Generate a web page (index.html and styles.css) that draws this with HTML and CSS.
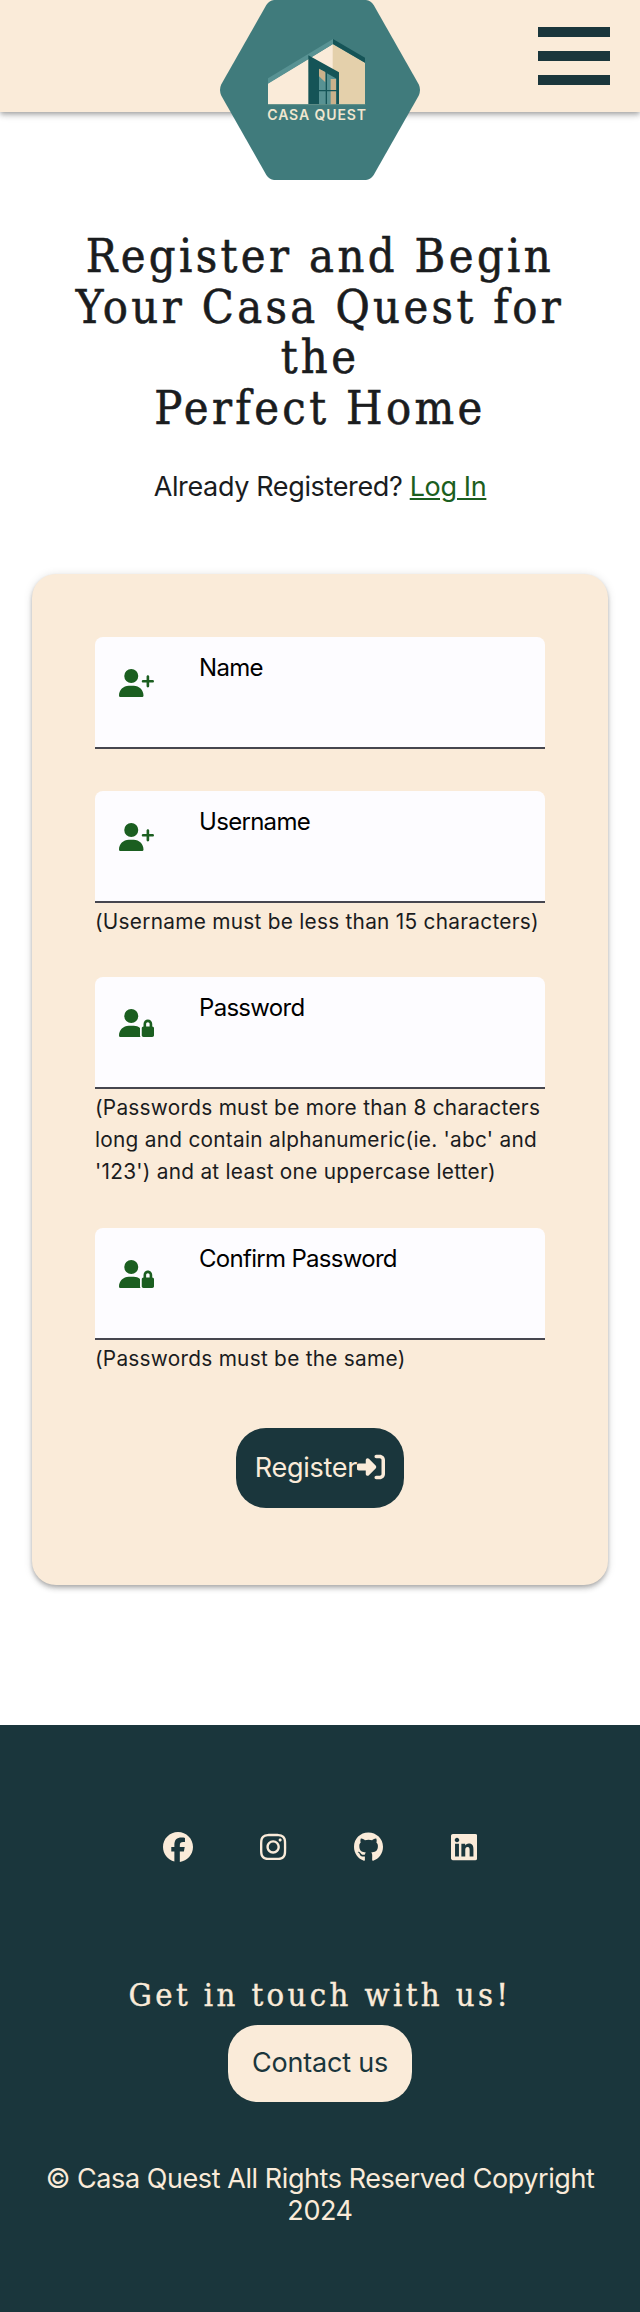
FILE: index.html
```html
<!DOCTYPE html>
<html lang="en">
<head>
<meta charset="utf-8">
<title>Casa Quest - Register</title>
<link rel="stylesheet" href="styles.css">
</head>
<body>
<svg class="sprite" aria-hidden="true">
  <symbol id="user-plus" viewBox="0 0 640 512"><path d="M96 128a128 128 0 1 1 256 0A128 128 0 1 1 96 128zM0 482.3C0 383.8 79.8 304 178.3 304h91.4C368.2 304 448 383.8 448 482.3c0 16.4-13.3 29.7-29.7 29.7H29.7C13.3 512 0 498.7 0 482.3zM504 312V248H440c-13.3 0-24-10.7-24-24s10.7-24 24-24h64V136c0-13.3 10.7-24 24-24s24 10.7 24 24v64h64c13.3 0 24 10.7 24 24s-10.7 24-24 24H552v64c0 13.3-10.7 24-24 24s-24-10.7-24-24z"/></symbol>
  <symbol id="user-lock" viewBox="0 0 640 512"><path d="M224 256A128 128 0 1 0 224 0a128 128 0 1 0 0 256zm-45.7 48C79.8 304 0 383.8 0 482.3C0 498.7 13.3 512 29.7 512H392.6c-5.4-9.4-8.6-20.3-8.6-32V352c0-2.1 .1-4.2 .3-6.3c-31-26-71-41.7-114.6-41.7H178.3zM528 240c17.7 0 32 14.3 32 32v48H496V272c0-17.7 14.3-32 32-32zm-80 32v48c-17.7 0-32 14.3-32 32V480c0 17.7 14.3 32 32 32H608c17.7 0 32-14.3 32-32V352c0-17.7-14.3-32-32-32V272c0-44.2-35.8-80-80-80s-80 35.8-80 80z"/></symbol>
</svg>

<header class="topbar">
  <a class="logo" href="#" aria-label="Casa Quest">
    <svg width="200" height="180" viewBox="60 0 600 540">
      <path fill="#407b7c" d="M222 0H498Q512 1 521 15L656 253Q664 270 656 287L521 525Q512 539 498 540H222Q208 539 199 525L64 287Q56 270 64 253L199 15Q208 1 222 0Z"/>
      <path fill="#faebd9" d="M204 250L399 132V313H204Z"/>
      <path fill="#e4d0ab" d="M398 132L495 188V313H398Z"/>
      <path fill="#589293" d="M204 235L399 117V132L325 178L204 251Z"/>
      <path fill="#155457" d="M399 117L495 173V188L399 132Z"/>
      <path fill="#155457" d="M325 166L417 217V313H325Z"/>
      <path fill="#589293" d="M357 206L411 237V313H357Z"/>
      <path fill="#cbb18b" d="M357 206L376 216V247L357 229ZM392 237H408V313H392Z"/>
      <path fill="none" stroke="#155457" stroke-width="4" d="M379 216V313M357 272H412M411 234V313"/>
      <path stroke="#5f9087" stroke-width="2" d="M204 314H497"/>
      <text class="logo-text" x="202" y="361" textLength="296">CASA QUEST</text>
    </svg>
  </a>
  <button class="menu" aria-label="Menu"><span></span><span></span><span></span></button>
</header>

<main class="page">
  <h1 class="title">Register and Begin<br>Your Casa Quest for<br>the<br>Perfect Home</h1>
  <p class="switch">Already Registered? <a href="#">Log In</a></p>

  <form class="card">
    <div class="field">
      <label class="input"><svg class="icon"><use href="#user-plus"/></svg><span>Name</span></label>
    </div>
    <div class="field">
      <label class="input"><svg class="icon"><use href="#user-plus"/></svg><span>Username</span></label>
      <p class="hint">(Username must be less than 15 characters)</p>
    </div>
    <div class="field">
      <label class="input"><svg class="icon"><use href="#user-lock"/></svg><span>Password</span></label>
      <p class="hint">(Passwords must be more than 8 characters<br>long and contain alphanumeric(ie. 'abc' and<br>'123') and at least one uppercase letter)</p>
    </div>
    <div class="field">
      <label class="input"><svg class="icon"><use href="#user-lock"/></svg><span>Confirm Password</span></label>
      <p class="hint">(Passwords must be the same)</p>
    </div>
    <button class="submit" type="button"><span>Register</span><svg width="28" height="28" viewBox="0 0 512 512"><path d="M217.9 105.9L340.7 228.7c7.2 7.2 11.3 17.1 11.3 27.3s-4.1 20.1-11.3 27.3L217.9 406.1c-6.4 6.4-15 9.9-24 9.9c-18.7 0-33.9-15.2-33.9-33.9l0-62.1L32 320c-17.7 0-32-14.3-32-32l0-64c0-17.7 14.3-32 32-32l128 0 0-62.1c0-18.7 15.2-33.9 33.9-33.9c9 0 17.6 3.6 24 9.9zM352 416l64 0c17.7 0 32-14.3 32-32l0-256c0-17.7-14.3-32-32-32l-64 0c-17.7 0-32-14.3-32-32s14.3-32 32-32l64 0c53 0 96 43 96 96l0 256c0 53-43 96-96 96l-64 0c-17.7 0-32-14.3-32-32s14.3-32 32-32z"/></svg></button>
  </form>
</main>

<footer class="footer">
  <nav class="social">
    <a href="#" aria-label="Facebook"><svg width="30" height="30" viewBox="0 0 512 512"><path d="M512 256C512 114.6 397.4 0 256 0S0 114.6 0 256C0 376 82.7 476.8 194.2 504.5V334.2H141.4V256h52.8V222.3c0-87.1 39.4-127.5 125-127.5c16.2 0 44.2 3.2 55.7 6.4V172c-6-.6-16.5-1-29.6-1c-42 0-58.2 15.9-58.2 57.2V256h83.6l-14.4 78.2H287V510.1C413.8 494.8 512 386.9 512 256h0z"/></svg></a>
    <a href="#" aria-label="Instagram"><svg width="26.25" height="30" viewBox="0 0 448 512"><path d="M224.1 141c-63.6 0-114.9 51.3-114.9 114.9s51.3 114.9 114.9 114.9S339 319.5 339 255.9 287.7 141 224.1 141zm0 189.6c-41.1 0-74.7-33.5-74.7-74.7s33.5-74.7 74.7-74.7 74.7 33.5 74.7 74.7-33.6 74.7-74.7 74.7zm146.4-194.3c0 14.9-12 26.8-26.8 26.8-14.9 0-26.8-12-26.8-26.8s12-26.8 26.8-26.8 26.8 12 26.8 26.8zm76.1 27.2c-1.7-35.9-9.9-67.7-36.2-93.9-26.2-26.2-58-34.4-93.9-36.2-37-2.1-147.9-2.1-184.9 0-35.8 1.7-67.6 9.9-93.9 36.1s-34.4 58-36.2 93.9c-2.1 37-2.1 147.9 0 184.9 1.7 35.9 9.9 67.7 36.2 93.9s58 34.4 93.9 36.2c37 2.1 147.9 2.1 184.9 0 35.9-1.7 67.7-9.9 93.9-36.2 26.2-26.2 34.4-58 36.2-93.9 2.1-37 2.1-147.8 0-184.8zM398.8 388c-7.8 19.6-22.9 34.7-42.6 42.6-29.5 11.7-99.5 9-132.1 9s-102.7 2.6-132.1-9c-19.6-7.8-34.7-22.9-42.6-42.6-11.7-29.5-9-99.5-9-132.1s-2.6-102.7 9-132.1c7.8-19.6 22.9-34.7 42.6-42.6 29.5-11.7 99.5-9 132.1-9s102.7-2.6 132.1 9c19.6 7.8 34.7 22.9 42.6 42.6 11.7 29.5 9 99.5 9 132.1s2.7 102.7-9 132.1z"/></svg></a>
    <a href="#" aria-label="GitHub"><svg width="29" height="30" viewBox="0 0 496 512"><path d="M244.8 8C106.1 8 0 113.3 0 252c0 110.9 69.8 205.8 169.5 239.2 12.8 2.3 17.3-5.6 17.3-12.1 0-6.2-.3-40.4-.3-61.4 0 0-70 15-84.7-29.8 0 0-11.4-29.1-27.8-36.6 0 0-22.9-15.7 1.6-15.4 0 0 24.9 2 38.6 25.8 21.9 38.6 58.6 27.5 72.9 20.9 2.3-16 8.8-27.1 16-33.7-55.9-6.2-112.3-14.3-112.3-110.5 0-27.5 7.6-41.3 23.6-58.9-2.6-6.5-11.1-33.3 2.6-67.9 20.9-6.5 69 27 69 27 20-5.6 41.5-8.5 62.8-8.5s42.8 2.9 62.8 8.5c0 0 48.1-33.6 69-27 13.7 34.7 5.2 61.4 2.6 67.9 16 17.7 25.8 31.5 25.8 58.9 0 96.5-58.9 104.2-114.8 110.5 9.2 7.9 17 22.9 17 46.4 0 33.7-.3 75.4-.3 83.6 0 6.5 4.6 14.4 17.3 12.1C428.2 457.8 496 362.9 496 252 496 113.3 383.5 8 244.8 8z"/></svg></a>
    <a href="#" aria-label="LinkedIn"><svg width="26.25" height="30" viewBox="0 0 448 512"><path d="M416 32H31.9C14.3 32 0 46.5 0 64.3v383.4C0 465.5 14.3 480 31.9 480H416c17.6 0 32-14.5 32-32.3V64.3c0-17.8-14.4-32.3-32-32.3zM135.4 416H69V202.2h66.5V416zm-33.2-243c-21.3 0-38.5-17.3-38.5-38.5S80.9 96 102.2 96c21.2 0 38.5 17.3 38.5 38.5 0 21.3-17.2 38.5-38.5 38.5zm282.1 243h-66.4V312c0-24.8-.5-56.7-34.5-56.7-34.6 0-39.9 27-39.9 54.9V416h-66.4V202.2h63.7v29.2h.9c8.9-16.8 30.6-34.5 62.2-34.5 66.5 0 78.8 43.8 78.8 100.9V416z"/></svg></a>
  </nav>
  <h2 class="touch">Get in touch with us!</h2>
  <a class="contact" href="#">Contact us</a>
  <p class="legal">© Casa Quest All Rights Reserved Copyright<br>2024</p>
</footer>
</body>
</html>
```
FILE: styles.css
```css
* { box-sizing: border-box; }
body {
  margin: 0;
  background: #fff;
  color: #1a1c1e;
  font-family: Inter, "Liberation Sans", sans-serif;
}
h1, h2, p { margin: 0; font-weight: 400; }
button { border: 0; font: inherit; }
.sprite { display: none; }
svg { display: block; fill: currentColor; }

.topbar {
  position: relative;
  display: flex;
  justify-content: flex-end;
  height: 112px;
  padding: 27px 30px 0 0;
  background: #faebd9;
  box-shadow: 0 2px 4px -1px rgba(0,0,0,.2), 0 4px 5px 0 rgba(0,0,0,.14), 0 1px 10px 0 rgba(0,0,0,.12);
}
/* The badge hangs below the bar */
.logo { position: absolute; left: 50%; top: 0; transform: translateX(-50%); }
.logo-text { font: 600 42px Inter, sans-serif; fill: #f0e6cf; }
.menu {
  display: flex;
  flex-direction: column;
  gap: 14px;
  width: 72px;
  height: 58px;
  padding: 0;
  background: none;
}
.menu span { width: 72px; height: 10px; background: #1a363c; }

.page {
  display: flex;
  flex-direction: column;
  align-items: center;
  padding: 119px 32px 140px;
}
.title {
  font-family: "DejaVu Serif Condensed", "DejaVu Serif", serif;
  font-stretch: condensed;
  font-size: 46.5px;
  line-height: 50.5px;
  letter-spacing: 3.4px;
  text-align: center;
  white-space: nowrap;
  -webkit-text-stroke: 0.6px currentColor;
}
.switch {
  height: 32px;
  margin-top: 38px;
  font-size: 27px;
  line-height: 32px;
  letter-spacing: -0.36px;
  white-space: nowrap;
}
.switch a { color: #1b5e20; text-decoration-thickness: 2px; text-underline-offset: 2px; }

.card {
  display: flex;
  flex-direction: column;
  align-items: center;
  gap: 42px;
  width: 576px;
  height: 1011px;
  margin-top: 71px;
  padding-top: 63px;
  border-radius: 24px;
  background: #faebd9;
  box-shadow: 0 2px 4px -1px rgba(0,0,0,.2), 0 4px 5px 0 rgba(0,0,0,.14), 0 1px 10px 0 rgba(0,0,0,.12);
}
.field { width: 450px; }
.input {
  display: flex;
  height: 112px;
  padding-left: 24px;
  border-bottom: 2px solid #46464f;
  border-radius: 8px 8px 0 0;
  background: #fdfcff;
  color: #000;
  font-size: 24px;
  line-height: 32px;
  letter-spacing: -0.7px;
}
.input span { margin: 15px 0 0 45px; }
.icon { width: 35px; height: 28px; margin-top: 31.6px; color: #1b5e20; }
.hint {
  margin: 2.5px 0 -2.5px;
  font-size: 20.8px;
  line-height: 32.3px;
  letter-spacing: 0.27px;
  white-space: nowrap;
}
.submit {
  display: flex;
  align-items: center;
  justify-content: center;
  width: 168px;
  height: 80px;
  margin-top: 14px;
  padding: 0 0 2px;
  border-radius: 30px;
  background: #1a363c;
  color: #faebd9;
  font-size: 27px;
  letter-spacing: -0.25px;
}

.footer {
  display: flex;
  flex-direction: column;
  align-items: center;
  height: 587px;
  padding-top: 107px;
  background: #1a363c;
  color: #faebd9;
}
.social { display: flex; gap: 67.8px; }
.social a { color: inherit; }
.touch {
  margin-top: 113px;
  font-family: "DejaVu Serif Condensed", "DejaVu Serif", serif;
  font-stretch: condensed;
  font-size: 32.5px;
  line-height: 40px;
  letter-spacing: 3.4px;
  white-space: nowrap;
  -webkit-text-stroke: 0.4px currentColor;
}
.contact {
  display: flex;
  align-items: center;
  justify-content: center;
  width: 184px;
  height: 77px;
  margin-top: 10px;
  padding-bottom: 2px;
  border-radius: 30px;
  background: #faebd9;
  color: #1a363c;
  font-size: 27px;
  letter-spacing: -0.2px;
  text-decoration: none;
}
.legal {
  margin-top: 61px;
  font-size: 27px;
  line-height: 32px;
  letter-spacing: -0.43px;
  text-align: center;
  white-space: nowrap;
}
```
